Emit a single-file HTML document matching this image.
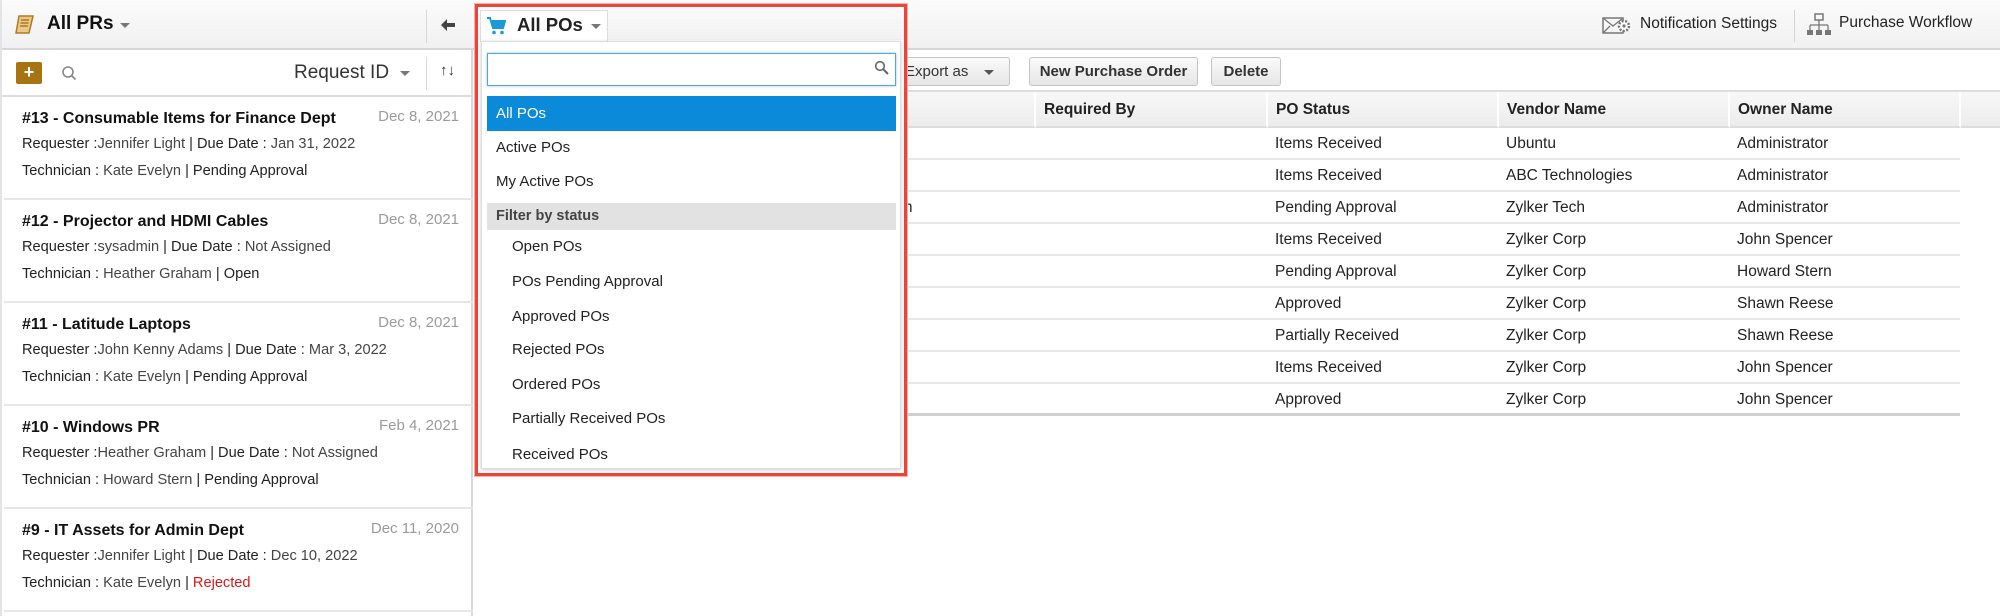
<!DOCTYPE html>
<html><head><meta charset="utf-8"><style>
*{box-sizing:border-box;margin:0;padding:0}
body{width:2000px;height:616px;overflow:hidden;background:#fff;font-family:"Liberation Sans",sans-serif;color:#222;position:relative}
.abs{position:absolute}
.hdr{left:0;top:0;width:2000px;height:50px;background:linear-gradient(#fbfbfb,#f1f1f1);border-bottom:2px solid #d6d6d6}
.left{left:0;top:0;width:473px;height:616px;border-right:2px solid #d8d8d8;border-left:2px solid #e4e4e4}
.item{position:absolute;left:2px;width:469px;height:103px;border-bottom:2px solid #e6e6e6}
.item .t{position:absolute;left:18px;top:13px;font-weight:bold;font-size:16px;color:#111}
.item .d{position:absolute;right:14px;top:11px;font-size:15px;color:#9a9a9a}
.item .l{position:absolute;left:18px;font-size:14.6px;color:#222;white-space:nowrap}
.item .l span{color:#444}
.btn{position:absolute;top:57px;height:29px;border:1px solid #c4c4c4;border-radius:3px;background:linear-gradient(#fafafa,#e6e6e6);font-size:15px;font-weight:bold;color:#333;line-height:27px;text-align:center}
.th{position:absolute;top:92px;height:36px;background:linear-gradient(#f8f8f8,#ececec);border-bottom:2px solid #ddd;font-weight:bold;font-size:15.5px;line-height:36px;padding-left:8px;border-right:2px solid #fff}
.row{position:absolute;left:475px;width:1485px;height:32px;border-bottom:2px solid #e8e8e8;font-size:15.5px}
.row div{position:absolute;top:7px}
.dd{font-size:15px;color:#222;position:absolute;left:14px}
.sub{left:30px}
</style></head><body>
<div class="abs hdr"></div>
<div class="abs left">
 <div class="abs" style="left:0;top:0;width:471px;height:50px;background:linear-gradient(#fbfbfb,#f1f1f1);border-bottom:2px solid #d6d6d6"></div>
 <svg class="abs" style="left:12px;top:14px" width="22" height="22" viewBox="0 0 22 22"><path d="M5 2h14l-4 17H2z" fill="#e8c98a" stroke="#b07a20" stroke-width="1.5"/><path d="M7 6h8M6.5 9h8M6 12h8" stroke="#a06a10" stroke-width="1.2"/></svg>
 <div class="abs" style="left:45px;top:13px;font-weight:bold;font-size:19px;color:#111">All PRs</div>
 <div class="abs" style="left:118px;top:23px;border:5px solid transparent;border-top:5px solid #777;border-bottom:0"></div>
 <div class="abs" style="left:424px;top:10px;width:1px;height:33px;background:#d8d8d8"></div>
 <svg class="abs" style="left:438px;top:18px" width="16" height="14" viewBox="0 0 16 14"><path d="M1 7l6-6v4h8v4H7v4z" fill="#444"/></svg>
 <div class="abs" style="left:14px;top:62px;width:26px;height:22px;background:#a67512;border-radius:2px;color:#fff;font-weight:bold;font-size:18px;text-align:center;line-height:20px">+</div>
 <svg class="abs" style="left:59px;top:65px" width="16" height="16" viewBox="0 0 16 16"><circle cx="7" cy="7" r="5" fill="none" stroke="#888" stroke-width="1.6"/><path d="M10.5 10.5l4 4" stroke="#888" stroke-width="1.8"/></svg>
 <div class="abs" style="left:292px;top:62px;font-size:19px;color:#333">Request ID</div>
 <div class="abs" style="left:398px;top:71px;border:5px solid transparent;border-top:5px solid #777;border-bottom:0"></div>
 <div class="abs" style="left:424px;top:57px;width:1px;height:33px;background:#d8d8d8"></div>
 <div class="abs" style="left:438px;top:62px;font-size:15px;color:#333">↑<b>↓</b></div>
 <div class="abs" style="left:0;top:95px;width:471px;height:2px;background:#ddd"></div>

 <div class="item" style="top:97px"><div class="t">#13 - Consumable Items for Finance Dept</div><div class="d">Dec 8, 2021</div><div class="l" style="top:39px">Requester :<span>Jennifer Light</span> | Due Date : <span>Jan 31, 2022</span></div><div class="l" style="top:66px">Technician : <span>Kate Evelyn</span> | Pending Approval</div></div>
 <div class="item" style="top:200px"><div class="t">#12 - Projector and HDMI Cables</div><div class="d">Dec 8, 2021</div><div class="l" style="top:39px">Requester :<span>sysadmin</span> | Due Date : <span>Not Assigned</span></div><div class="l" style="top:66px">Technician : <span>Heather Graham</span> | Open</div></div>
 <div class="item" style="top:303px"><div class="t">#11 - Latitude Laptops</div><div class="d">Dec 8, 2021</div><div class="l" style="top:39px">Requester :<span>John Kenny Adams</span> | Due Date : <span>Mar 3, 2022</span></div><div class="l" style="top:66px">Technician : <span>Kate Evelyn</span> | Pending Approval</div></div>
 <div class="item" style="top:406px"><div class="t">#10 - Windows PR</div><div class="d">Feb 4, 2021</div><div class="l" style="top:39px">Requester :<span>Heather Graham</span> | Due Date : <span>Not Assigned</span></div><div class="l" style="top:66px">Technician : <span>Howard Stern</span> | Pending Approval</div></div>
 <div class="item" style="top:509px"><div class="t">#9 - IT Assets for Admin Dept</div><div class="d">Dec 11, 2020</div><div class="l" style="top:39px">Requester :<span>Jennifer Light</span> | Due Date : <span>Dec 10, 2022</span></div><div class="l" style="top:66px">Technician : <span>Kate Evelyn</span> | <span style="color:#d81818">Rejected</span></div></div>
</div>

<svg class="abs" style="left:1602px;top:15px" width="30" height="22" viewBox="0 0 30 22"><rect x="1" y="3" width="20" height="15" fill="none" stroke="#777" stroke-width="1.5"/><path d="M1 3l10 8 10-8M1 18l7-7" stroke="#777" stroke-width="1.3" fill="none"/><circle cx="22" cy="11" r="5" fill="#fff" stroke="#777" stroke-width="2.5" stroke-dasharray="2 1.5"/><circle cx="22" cy="11" r="1.6" fill="#777"/></svg>
<div class="abs" style="left:1640px;top:15px;font-size:15.5px;color:#222">Notification Settings</div>
<div class="abs" style="left:1794px;top:10px;width:1px;height:32px;background:#d4d4d4"></div>
<svg class="abs" style="left:1806px;top:13px" width="26" height="24" viewBox="0 0 26 24"><rect x="9" y="1" width="8" height="6" fill="none" stroke="#777" stroke-width="1.5"/><path d="M13 7v5M4 12h18M4 12v5M13 12v5M22 12v5" stroke="#777" stroke-width="1.3" fill="none"/><rect x="1" y="17" width="6" height="5" fill="#777"/><rect x="10" y="17" width="6" height="5" fill="#777"/><rect x="19" y="17" width="6" height="5" fill="#777"/></svg>
<div class="abs" style="left:1839px;top:14px;font-size:15.5px;color:#222">Purchase Workflow</div>

<div class="btn" style="left:880px;width:130px;font-weight:normal;text-align:left;padding-left:24px">Export as</div>
<div class="abs" style="left:984px;top:70px;border:5px solid transparent;border-top:5px solid #555;border-bottom:0"></div>
<div class="btn" style="left:1029px;width:169px">New Purchase Order</div>
<div class="btn" style="left:1211px;width:70px">Delete</div>
<div class="abs" style="left:475px;top:90px;width:1525px;height:2px;background:#ddd"></div>

<div class="th" style="left:475px;width:561px"></div>
<div class="th" style="left:1036px;width:232px">Required By</div>
<div class="th" style="left:1268px;width:231px">PO Status</div>
<div class="th" style="left:1499px;width:231px">Vendor Name</div>
<div class="th" style="left:1730px;width:231px">Owner Name</div>
<div class="th" style="left:1961px;width:39px;border-right:0"></div>

<div class="row" style="top:128px"><div style="left:800px">Items Received</div><div style="left:1031px">Ubuntu</div><div style="left:1262px">Administrator</div></div>
<div class="row" style="top:160px"><div style="left:800px">Items Received</div><div style="left:1031px">ABC Technologies</div><div style="left:1262px">Administrator</div></div>
<div class="row" style="top:192px"><div style="left:416px">am</div><div style="left:800px">Pending Approval</div><div style="left:1031px">Zylker Tech</div><div style="left:1262px">Administrator</div></div>
<div class="row" style="top:224px"><div style="left:800px">Items Received</div><div style="left:1031px">Zylker Corp</div><div style="left:1262px">John Spencer</div></div>
<div class="row" style="top:256px"><div style="left:800px">Pending Approval</div><div style="left:1031px">Zylker Corp</div><div style="left:1262px">Howard Stern</div></div>
<div class="row" style="top:288px"><div style="left:416px">s</div><div style="left:800px">Approved</div><div style="left:1031px">Zylker Corp</div><div style="left:1262px">Shawn Reese</div></div>
<div class="row" style="top:320px"><div style="left:800px">Partially Received</div><div style="left:1031px">Zylker Corp</div><div style="left:1262px">Shawn Reese</div></div>
<div class="row" style="top:352px"><div style="left:800px">Items Received</div><div style="left:1031px">Zylker Corp</div><div style="left:1262px">John Spencer</div></div>
<div class="row" style="top:384px;border-bottom:3px solid #d0d0d0"><div style="left:800px">Approved</div><div style="left:1031px">Zylker Corp</div><div style="left:1262px">John Spencer</div></div>

<div class="abs" style="left:475px;top:4px;width:432px;height:472px;border:3px solid #e8453c;background:#fff;box-shadow:0 0 0 1px #f5b0aa"></div>
<div class="abs" style="left:478px;top:7px;width:426px;height:33px;background:linear-gradient(#fbfbfb,#f1f1f1)"></div>
<div class="abs" style="left:480px;top:10px;width:128px;height:32px;background:#fff;border:1px solid #ddd;border-bottom:0"></div>
<svg class="abs" style="left:486px;top:16px" width="20" height="20" viewBox="0 0 20 20"><path d="M1 2h3l3 10h10l2-7H6" fill="none" stroke="#1a9ad6" stroke-width="2"/><path d="M6 5h13l-2 7H7z" fill="#1a9ad6"/><circle cx="8" cy="16.5" r="1.8" fill="#1a9ad6"/><circle cx="16" cy="16.5" r="1.8" fill="#1a9ad6"/></svg>
<div class="abs" style="left:517px;top:14px;font-weight:bold;font-size:18.5px;color:#222">All POs</div>
<div class="abs" style="left:591px;top:24px;border:5px solid transparent;border-top:5px solid #777;border-bottom:0"></div>
<div class="abs" style="left:481px;top:41px;width:420px;height:428px;background:#fff;border:1px solid #ddd;box-shadow:0 1px 4px rgba(0,0,0,.2)">
 <div class="abs" style="left:5px;top:11px;width:409px;height:33px;border:1px solid #4ea4e6;box-shadow:0 0 3px #9ccbf0"></div>
 <svg class="abs" style="left:392px;top:18px" width="15" height="15" viewBox="0 0 15 15"><circle cx="6" cy="6" r="4.3" fill="none" stroke="#666" stroke-width="1.6"/><path d="M9 9l5 5" stroke="#666" stroke-width="2"/></svg>
 <div class="abs" style="left:5px;top:54px;width:409px;height:35px;background:#0a8ad9"></div>
 <div class="dd" style="top:63px;color:#fff">All POs</div>
 <div class="dd" style="top:97px">Active POs</div>
 <div class="dd" style="top:131px">My Active POs</div>
 <div class="abs" style="left:5px;top:161px;width:409px;height:27px;background:#e2e2e2"></div>
 <div class="dd" style="top:166px;font-weight:bold;color:#444;font-size:14.5px">Filter by status</div>
 <div class="dd sub" style="top:196px">Open POs</div>
 <div class="dd sub" style="top:231px">POs Pending Approval</div>
 <div class="dd sub" style="top:266px">Approved POs</div>
 <div class="dd sub" style="top:299px">Rejected POs</div>
 <div class="dd sub" style="top:334px">Ordered POs</div>
 <div class="dd sub" style="top:368px">Partially Received POs</div>
 <div class="abs" style="left:0;top:400px;width:418px;height:21px;overflow:hidden"><div class="dd sub" style="top:4px">Received POs</div></div>
</div>
</body></html>
